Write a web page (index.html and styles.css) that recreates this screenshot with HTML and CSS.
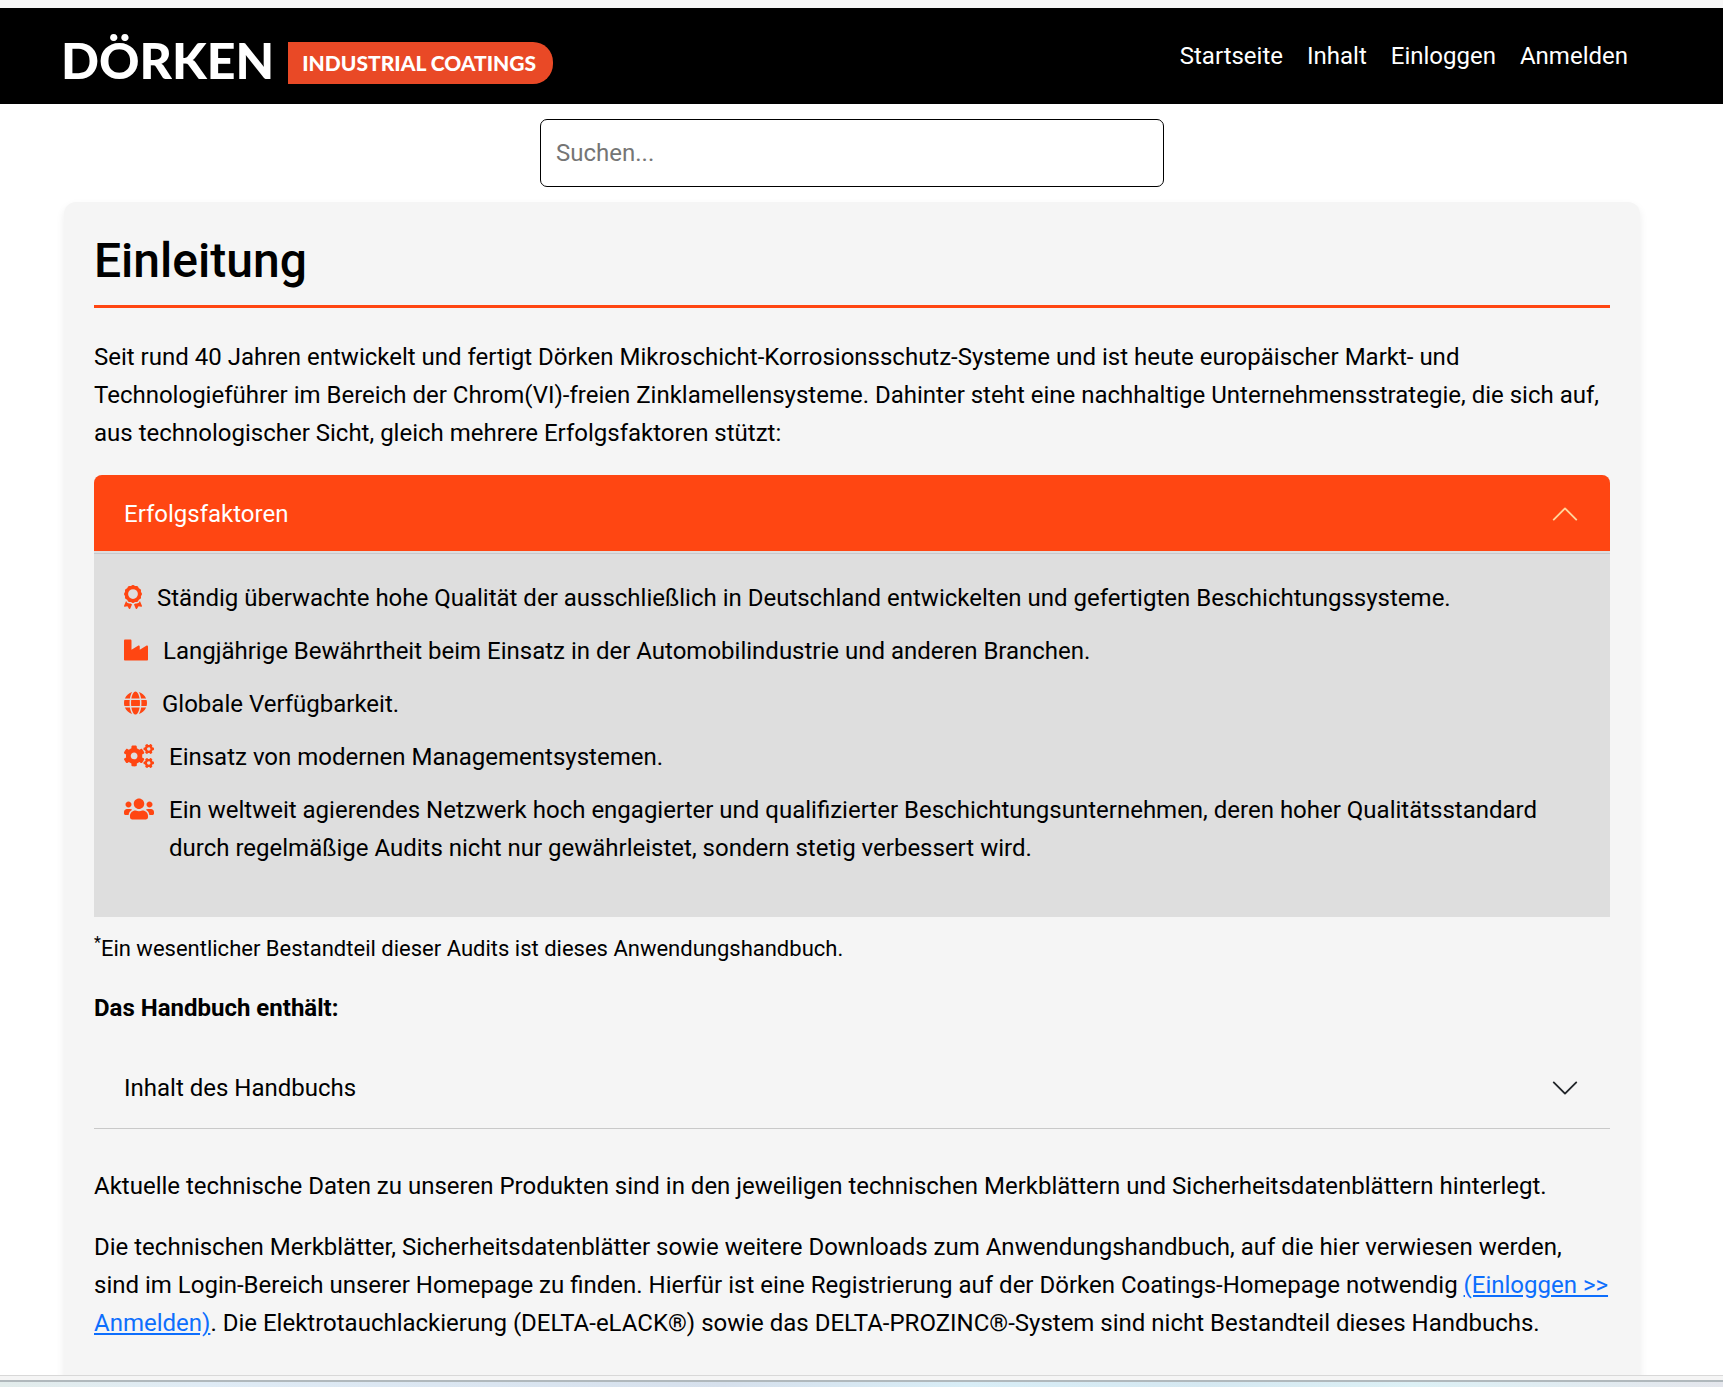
FILE: index.html
```html
<!DOCTYPE html>
<html lang="de">
<head>
<meta charset="utf-8">
<meta name="viewport" content="width=device-width, initial-scale=1">
<title>Einleitung – Dörken Anwendungshandbuch</title>
<link rel="stylesheet" href="styles.css">
</head>
<body>
<header class="site-header">
  <a class="brand" href="#">
    <span class="brand-name">DÖRKEN</span>
    <span class="brand-badge">INDUSTRIAL COATINGS</span>
  </a>
  <nav class="site-nav">
    <a href="#">Startseite</a>
    <a href="#">Inhalt</a>
    <a href="#">Einloggen</a>
    <a href="#">Anmelden</a>
  </nav>
</header>

<main class="page">
  <input class="search" type="search" placeholder="Suchen..." aria-label="Suchen">

  <article class="card">
    <h1>Einleitung</h1>
    <p>Seit rund 40 Jahren entwickelt und fertigt Dörken Mikroschicht-Korrosionsschutz-Systeme und ist heute europäischer Markt- und Technologieführer im Bereich der Chrom(VI)-freien Zinklamellensysteme. Dahinter steht eine nachhaltige Unternehmensstrategie, die sich auf, aus technologischer Sicht, gleich mehrere Erfolgsfaktoren stützt:</p>

    <section class="accordion accordion-open">
      <button class="accordion-button" type="button" aria-expanded="true">
        <span>Erfolgsfaktoren</span>
        <svg class="chevron" viewBox="0 0 16 16" aria-hidden="true"><path d="M2 11l6-6 6 6"/></svg>
      </button>
      <div class="accordion-body">
        <ul class="factors">
          <li>
            <svg class="icon icon-award" viewBox="0 0 384 512" aria-hidden="true"><path d="M173.8 5.5c11-7.3 25.4-7.3 36.4 0L228 17.2c6 3.9 13 5.8 20.1 5.4l21.3-1.3c13.2-.8 25.6 6.4 31.5 18.2l9.6 19.1c3.2 6.4 8.4 11.5 14.7 14.7L344.5 83c11.8 5.9 19 18.3 18.2 31.5l-1.3 21.3c-.4 7.1 1.5 14.2 5.4 20.1l11.8 17.8c7.3 11 7.3 25.4 0 36.4L366.8 228c-3.9 6-5.8 13-5.4 20.1l1.3 21.3c.8 13.2-6.4 25.6-18.2 31.5l-19.1 9.6c-6.4 3.2-11.5 8.4-14.7 14.7L301 344.5c-5.9 11.8-18.3 19-31.5 18.2l-21.3-1.3c-7.1-.4-14.2 1.5-20.1 5.4l-17.8 11.8c-11 7.3-25.4 7.3-36.4 0L156 366.8c-6-3.9-13-5.8-20.1-5.4l-21.3 1.3c-13.2 .8-25.6-6.4-31.5-18.2l-9.6-19.1c-3.2-6.4-8.4-11.5-14.7-14.7L39.5 301c-11.8-5.9-19-18.3-18.2-31.5l1.3-21.3c.4-7.1-1.5-14.2-5.4-20.1L5.5 210.2c-7.3-11-7.3-25.4 0-36.4L17.2 156c3.9-6 5.8-13 5.4-20.1l-1.3-21.3c-.8-13.2 6.4-25.6 18.2-31.5l19.1-9.6C65 70.2 70.2 65 73.4 58.6L83 39.5c5.9-11.8 18.3-19 31.5-18.2l21.3 1.3c7.1 .4 14.2-1.5 20.1-5.4L173.8 5.5zM296 192a104 104 0 1 0 -208 0 104 104 0 1 0 208 0zM1.3 441.8L44.4 339.3c.2 .1 .3 .2 .4 .4l9.6 19.1c11.7 23.2 36 37.3 62 35.8l21.3-1.3c.2 0 .5 0 .7 .2l17.8 11.8c5.1 3.3 10.5 5.9 16.1 7.7l-37.6 89.3c-2.3 5.5-7.4 9.2-13.3 9.7s-11.6-2.2-14.8-7.2L74.4 455.5l-56.1 8.3c-5.7 .8-11.4-1.5-15-6s-4.3-10.7-2.1-16zm248 60.4L211.7 413c5.6-1.8 11-4.3 16.1-7.7l17.8-11.8c.2-.1 .4-.2 .7-.2l21.3 1.3c26 1.5 50.3-12.6 62-35.8l9.6-19.1c.1-.2 .2-.3 .4-.4l43.2 102.5c2.2 5.3 1.4 11.4-2.1 16s-9.3 6.9-15 6l-56.1-8.3-32.2 49.2c-3.2 5-8.9 7.7-14.8 7.2s-11-4.3-13.3-9.7z"/></svg>
            <span>Ständig überwachte hohe Qualität der ausschließlich in Deutschland entwickelten und gefertigten Beschichtungssysteme.</span>
          </li>
          <li>
            <svg class="icon icon-industry" viewBox="0 0 512 512" aria-hidden="true"><path d="M475.115 163.781L336 252.309v-68.28c0-18.916-20.931-30.399-36.885-20.248L160 252.309V56c0-13.255-10.745-24-24-24H24C10.745 32 0 42.745 0 56v400c0 13.255 10.745 24 24 24h464c13.255 0 24-10.745 24-24V184.029c0-18.917-20.931-30.399-36.885-20.248z"/></svg>
            <span>Langjährige Bewährtheit beim Einsatz in der Automobilindustrie und anderen Branchen.</span>
          </li>
          <li>
            <svg class="icon icon-globe" viewBox="0 0 496 512" aria-hidden="true"><path d="M336.5 160C322 70.7 287.8 8 248 8s-74 62.7-88.5 152h177zM152 256c0 22.2 1.2 43.5 3.3 64h185.3c2.1-20.5 3.3-41.8 3.3-64s-1.2-43.5-3.3-64H155.3c-2.1 20.5-3.3 41.8-3.3 64zm324.7-96c-28.6-67.9-86.5-120.4-158-141.6 24.4 33.8 41.2 84.7 50 141.6h108zM177.2 18.4C105.8 39.6 47.8 92.1 19.3 160h108c8.7-56.9 25.5-107.8 49.9-141.6zM487.4 192H372.7c2.1 21 3.3 42.5 3.3 64s-1.2 43-3.3 64h114.6c5.5-20.5 8.6-41.8 8.6-64s-3.1-43.5-8.5-64zM120 256c0-21.5 1.2-43 3.3-64H8.6C3.2 212.5 0 233.8 0 256s3.2 43.5 8.6 64h114.6c-2-21-3.2-42.5-3.2-64zm39.5 96c14.5 89.3 48.7 152 88.5 152s74-62.7 88.5-152h-177zm159.3 141.6c71.4-21.2 129.4-73.7 158-141.6h-108c-8.8 56.9-25.6 107.8-50 141.6zM19.3 352c28.6 67.9 86.5 120.4 158 141.6-24.4-33.8-41.2-84.7-50-141.6h-108z"/></svg>
            <span>Globale Verfügbarkeit.</span>
          </li>
          <li>
            <svg class="icon icon-wide" viewBox="0 0 640 512" aria-hidden="true"><path id="small-cog" d="M512.1 191l-8.2 14.3c-3 5.3-9.4 7.5-15.1 5.4-11.8-4.4-22.6-10.7-32.1-18.6-4.6-3.8-5.8-10.5-2.8-15.7l8.2-14.3c-6.9-8-12.3-17.3-15.9-27.4h-16.5c-6 0-11.2-4.3-12.2-10.3-2-12-2.1-24.6 0-37.1 1-6 6.2-10.4 12.2-10.4h16.5c3.6-10.1 9-19.4 15.9-27.4l-8.2-14.3c-3-5.2-1.9-11.9 2.8-15.7 9.5-7.9 20.4-14.2 32.1-18.6 5.7-2.1 12.1.1 15.1 5.4l8.2 14.3c10.5-1.9 21.2-1.9 31.7 0L552 6.3c3-5.3 9.4-7.5 15.1-5.4 11.8 4.4 22.6 10.7 32.1 18.6 4.6 3.8 5.8 10.5 2.8 15.7l-8.2 14.3c6.9 8 12.3 17.3 15.9 27.4h16.5c6 0 11.2 4.3 12.2 10.3 2 12 2.1 24.6 0 37.1-1 6-6.2 10.4-12.2 10.4h-16.5c-3.6 10.1-9 19.4-15.9 27.4l8.2 14.3c3 5.2 1.9 11.9-2.8 15.7-9.5 7.9-20.4 14.2-32.1 18.6-5.7 2.1-12.1-.1-15.1-5.4l-8.2-14.3c-10.4 1.9-21.2 1.9-31.7 0zm-10.5-58.8c38.5 29.6 82.4-14.3 52.8-52.8-38.5-29.7-82.4 14.3-52.8 52.8z"/><use href="#small-cog" transform="translate(0 299)"/><path d="M386.3 286.1l33.7 16.8c10.1 5.8 14.5 18.1 10.5 29.1-8.9 24.2-26.4 46.4-42.6 65.8-7.4 8.9-20.2 11.1-30.3 5.3l-29.1-16.8c-16 13.7-34.6 24.6-54.9 31.7v33.6c0 11.6-8.3 21.6-19.7 23.6-24.6 4.2-50.4 4.4-75.9 0-11.5-2-20-11.9-20-23.6V418c-20.3-7.2-38.9-18-54.9-31.7L74 403c-10 5.8-22.9 3.6-30.3-5.3-16.2-19.4-33.3-41.6-42.2-65.7-4-10.9.4-23.2 10.5-29.1l33.3-16.8c-3.9-20.9-3.9-42.4 0-63.4L12 205.8c-10.1-5.8-14.6-18.1-10.5-29 8.9-24.2 26-46.4 42.2-65.8 7.4-8.9 20.2-11.1 30.3-5.3l29.1 16.8c16-13.7 34.6-24.6 54.9-31.7V57.1c0-11.5 8.2-21.5 19.6-23.5 24.6-4.2 50.5-4.4 76-.1 11.5 2 20 11.9 20 23.6v33.6c20.3 7.2 38.9 18 54.9 31.7l29.1-16.8c10-5.8 22.9-3.6 30.3 5.3 16.2 19.4 33.2 41.6 42.1 65.8 4 10.9.1 23.2-10 29.1l-33.7 16.8c3.9 21 3.9 42.5 0 63.5zm-117.6 21.1c59.2-77-28.7-164.9-105.7-105.7-59.2 77 28.7 164.9 105.7 105.7z"/></svg>
            <span>Einsatz von modernen Managementsystemen.</span>
          </li>
          <li>
            <svg class="icon icon-wide" viewBox="0 0 640 512" aria-hidden="true"><path d="M96 224c35.3 0 64-28.7 64-64s-28.7-64-64-64-64 28.7-64 64 28.7 64 64 64zm448 0c35.3 0 64-28.7 64-64s-28.7-64-64-64-64 28.7-64 64 28.7 64 64 64zm32 32h-64c-17.6 0-33.5 7.1-45.1 18.6 40.3 22.1 68.9 62 75.1 109.4h66c17.7 0 32-14.3 32-32v-32c0-35.3-28.7-64-64-64zm-256 0c61.9 0 112-50.1 112-112S381.9 32 320 32 208 82.1 208 144s50.1 112 112 112zm76.8 32h-8.3c-20.8 10-43.9 16-68.5 16s-47.6-6-68.5-16h-8.3C179.6 288 128 339.6 128 403.2V432c0 26.5 21.5 48 48 48h288c26.5 0 48-21.5 48-48v-28.8c0-63.6-51.6-115.2-115.2-115.2zm-223.7-13.4C161.5 263.1 145.6 256 128 256H64c-35.3 0-64 28.7-64 64v32c0 17.7 14.3 32 32 32h65.9c6.3-47.4 34.9-87.3 75.2-109.4z"/></svg>
            <span>Ein weltweit agierendes Netzwerk hoch engagierter und qualifizierter Beschichtungsunternehmen, deren hoher Qualitätsstandard durch regelmäßige Audits nicht nur gewährleistet, sondern stetig verbessert wird.</span>
          </li>
        </ul>
      </div>
    </section>

    <p class="footnote"><sup>*</sup>Ein wesentlicher Bestandteil dieser Audits ist dieses Anwendungshandbuch.</p>
    <p><strong>Das Handbuch enthält:</strong></p>

    <section class="accordion accordion-closed">
      <button class="accordion-button" type="button" aria-expanded="false">
        <span>Inhalt des Handbuchs</span>
        <svg class="chevron" viewBox="0 0 16 16" aria-hidden="true"><path d="M2 5l6 6 6-6"/></svg>
      </button>
    </section>

    <p>Aktuelle technische Daten zu unseren Produkten sind in den jeweiligen technischen Merkblättern und Sicherheitsdatenblättern hinterlegt.</p>
    <p>Die technischen Merkblätter, Sicherheitsdatenblätter sowie weitere Downloads zum Anwendungshandbuch, auf die hier verwiesen werden, sind im Login-Bereich unserer Homepage zu finden. Hierfür ist eine Registrierung auf der Dörken Coatings-Homepage notwendig <a href="#">(Einloggen &gt;&gt; Anmelden)</a>. Die Elektrotauchlackierung (DELTA-eLACK®) sowie das DELTA-PROZINC®-System sind nicht Bestandteil dieses Handbuchs.</p>
  </article>
</main>

<footer class="window-edge"></footer>
</body>
</html>
```
FILE: styles.css
```css
*,
*::before,
*::after {
  box-sizing: border-box;
}

body {
  display: flex;
  flex-direction: column;
  height: 100vh;
  margin: 0;
  overflow: hidden;
  border-top: 8px solid #f7f7f7;
  background: #fff;
  color: #000;
  font: 400 24px/38px Roboto, "Liberation Sans", sans-serif;
}

.site-header {
  display: flex;
  flex: none;
  align-items: center;
  justify-content: space-between;
  min-height: 96px;
  padding: 0 95px 0 61px;
  background: #000;
}

.brand {
  display: flex;
  align-items: center;
  gap: 14px;
  color: #fff;
  text-decoration: none;
}

.brand-name {
  padding-top: 8px;
  font: 900 50px/60px Lato, sans-serif;
}

.brand-badge {
  margin-top: 14px;
  padding: 0 17px 0 14px;
  border-radius: 0 20px 20px 0;
  background: #e94926;
  font: 900 21px/42px Lato, sans-serif;
}

.site-nav {
  display: flex;
  gap: 24px;
}

.site-nav a {
  color: #fff;
  text-decoration: none;
}

.page {
  flex: 1;
  min-height: 0;
  padding: 15px 83px 0 64px;
  overflow: hidden;
}

.search {
  display: block;
  width: 100%;
  max-width: 624px;
  height: 68px;
  margin: 0 auto 15px;
  padding: 0 15px;
  border: 1px solid #000;
  border-radius: 7px;
  background: #fff;
  color: #000;
  font: inherit;
  appearance: none;
}

.search::placeholder {
  color: #757575;
}

.card {
  padding: 30px;
  border-radius: 12px;
  background: #f5f5f5;
  box-shadow: 0 4px 8px rgba(0, 0, 0, 0.08);
}

h1 {
  margin: 0 0 30px;
  padding-bottom: 15px;
  border-bottom: 3px solid #ff4612;
  font-size: 48px;
  font-weight: 500;
  line-height: 58px;
}

p {
  margin: 0 0 23px;
}

a {
  color: #0d6efd;
}

.accordion-button {
  display: flex;
  align-items: center;
  justify-content: space-between;
  width: 100%;
  padding: 19px 30px;
  border: 0;
  background: transparent;
  color: inherit;
  font: inherit;
  text-align: left;
}

.chevron {
  width: 30px;
  height: 30px;
  fill: none;
  stroke: #212529;
  stroke-width: 1;
  stroke-linecap: round;
  stroke-linejoin: round;
}

.accordion-open {
  margin-bottom: 15px;
  border-radius: 8px 8px 0 0;
  background: #dedede;
}

.accordion-open .accordion-button {
  padding: 20px 30px 18px;
  border-radius: 8px 8px 0 0;
  background: #ff4612;
  color: #fff;
}

.accordion-open .chevron {
  stroke: #ffd59c;
}

.accordion-body {
  margin-top: 2px;
  padding: 25px 30px 50px;
  border-top: 1px solid #c6c9cc;
}

.accordion-closed {
  margin-bottom: 38px;
  padding-bottom: 2px;
  border-bottom: 1px solid #c9c9c9;
}

.factors {
  display: flex;
  flex-direction: column;
  gap: 15px;
  margin: 0;
  padding: 0;
  list-style: none;
}

.factors li {
  display: flex;
  align-items: flex-start;
  gap: 15px;
}

.icon {
  flex: none;
  height: 24px;
  margin-top: 6px;
  fill: #ff4612;
}

.icon-award {
  width: 18px;
}

.icon-industry {
  width: 24px;
}

.icon-globe {
  width: 23px;
}

.icon-wide {
  width: 30px;
}

.footnote {
  font-size: 22px;
  line-height: 34px;
}

.footnote sup {
  font-size: 16px;
  line-height: 0;
}

.window-edge {
  flex: none;
  height: 12px;
  border-top: 1px solid #d8d8d8;
  background:
    linear-gradient(#b0b8bc, #b0b8bc) 0 4px / 100% 2px no-repeat,
    linear-gradient(#f5f5f5, #f5f5f5) 0 0 / 100% 4px no-repeat,
    linear-gradient(90deg, #e2eceb, #dfebf5 12%, #d6e0ec 42%, #d8edf6 56%, #d5e8f1 70%, #dcf0f5 82%, #e4e6ec);
}
```
